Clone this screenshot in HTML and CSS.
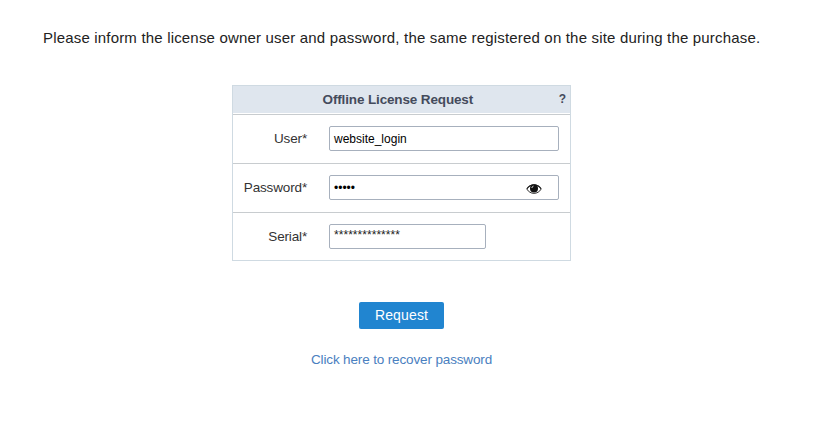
FILE: index.html
```html
<!DOCTYPE html>
<html lang="en">
<head>
<meta charset="utf-8">
<title>Offline License Request</title>
<link rel="stylesheet" href="styles.css">
</head>
<body>
<main class="page">
  <p class="intro">Please inform the license owner user and password, the same registered on the site during the purchase.</p>
  <form class="form">
    <section class="panel">
      <header class="panel-head"><h1 class="panel-title">Offline License Request</h1><span class="help">?</span></header>
      <div class="row"><label class="label">User*</label><div class="field"><span class="value">website_login</span></div></div>
      <div class="row"><label class="label">Password*</label><div class="field"><span class="value">•••••</span>
        <svg class="eye" viewBox="0 0 16 12" width="16" height="12"><path d="M.8 6C4 .2 12 .2 15.2 6C12 11.8 4 11.8 .8 6Z" fill="#fff" stroke="#333" stroke-width="1"/><path d="M1 5.8C4 .7 12 .7 15 5.8" fill="none" stroke="#222" stroke-width="1.2"/><circle cx="8" cy="5.4" r="4" fill="#111"/><path d="M5.8 5Q6.2 3.3 7.5 3.1" fill="none" stroke="#ddd" stroke-width="1"/></svg></div></div>
      <div class="row"><label class="label">Serial*</label><div class="field field-short"><span class="value value-masked">**************</span></div></div>
    </section>
    <button class="submit" type="button">Request</button>
    <a class="recover">Click here to recover password</a>
  </form>
</main>
</body>
</html>
```
FILE: styles.css
```css
* { box-sizing: border-box; }
body { margin: 0; background: #fff; font-family: "Liberation Sans", Arial, sans-serif; color: #333; }
.page { padding-top: 28px; }
.intro { margin: 0 0 0 43px; font-size: 15px; line-height: 20px; letter-spacing: .18px; white-space: nowrap; color: #222; }
.form { width: 803px; margin-top: 37px; display: flex; flex-direction: column; align-items: center; }
.panel { width: 339px; border: 1px solid #cfdae2; }
.panel-head { height: 28px; background: #dfe6ee; border-bottom: 1px solid #fff; display: flex; align-items: center; padding: 0 4px 0 4px; color: #444b5c; }
.panel-title { flex: 1; margin: 0; text-align: center; font-size: 13.5px; line-height: 15px; letter-spacing: -.14px; }
.help { font-size: 12px; line-height: 15px; font-weight: bold; }
.row { height: 49px; border-top: 1px solid #c8cccf; display: flex; align-items: flex-start; padding-top: 11px; }
.row:last-child { height: 48px; }
.label { width: 74px; margin-right: 22px; text-align: right; font-size: 13.5px; line-height: 25px; letter-spacing: -.15px; }
.field { width: 230px; height: 25px; border: 1px solid #a7b0bd; border-radius: 2px; display: flex; align-items: center; justify-content: space-between; padding: 1px 16px 0 4px; font-size: 12px; color: #000; }
.field-short { width: 157px; }
.value-masked { margin-bottom: 4px; letter-spacing: .04px; color: #222; }
.eye { margin-top: 2px; }
.submit { margin-top: 41px; width: 85px; height: 27px; padding: 0 0 2px; border: 0; border-radius: 2px; background: #2185d0; color: #fff; font: 14px "Liberation Sans", Arial, sans-serif; letter-spacing: .15px; }
.recover { margin-top: 23px; font-size: 13.5px; line-height: 15px; letter-spacing: -.14px; color: #4a80c0; }
```
